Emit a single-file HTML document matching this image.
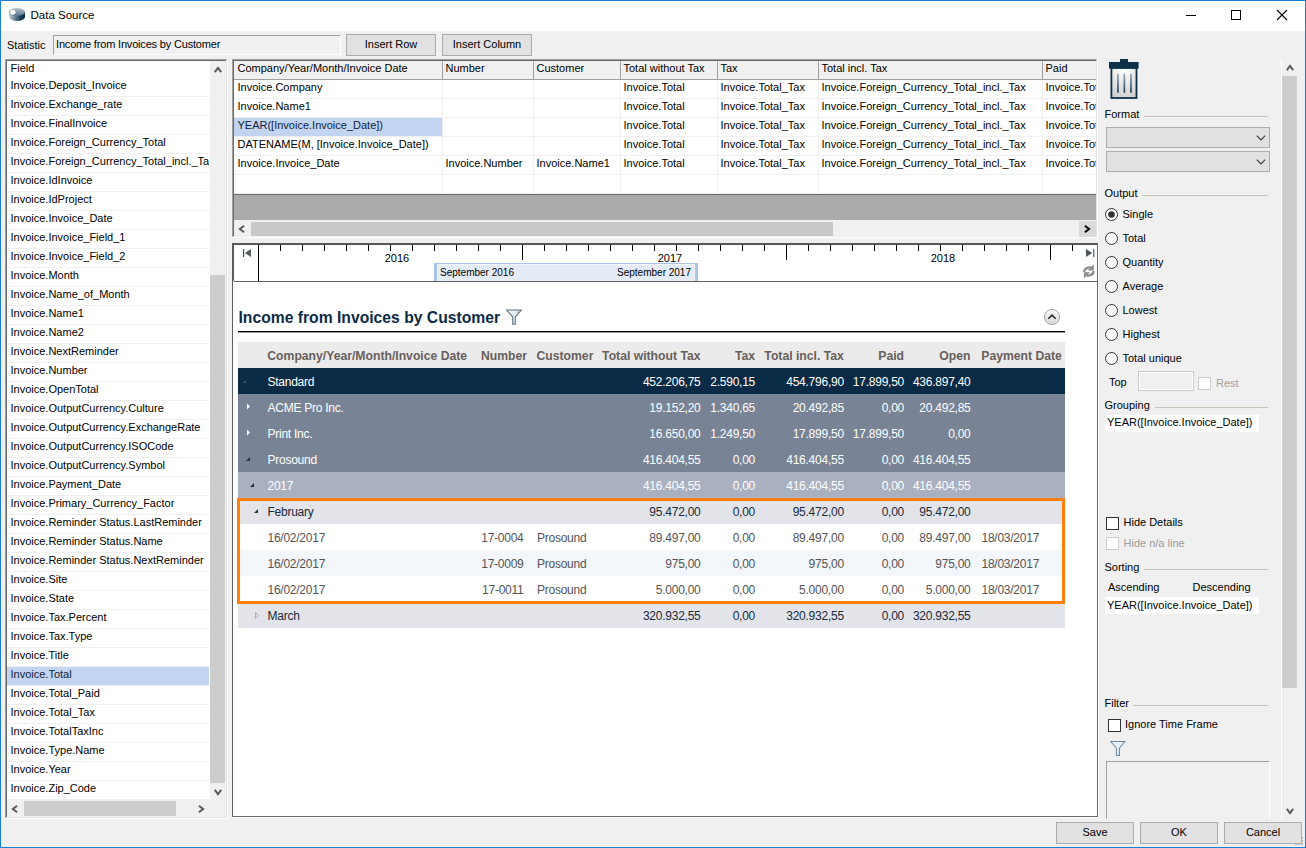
<!DOCTYPE html>
<html><head><meta charset="utf-8"><style>
html,body{margin:0;padding:0;width:1306px;height:848px;overflow:hidden;background:#f0f0f0}
body{position:relative;font-family:"Liberation Sans",sans-serif;font-size:11px;color:#000}
body div, body svg{position:absolute}
.t{white-space:nowrap}
</style></head><body>
<div style="left:0px;top:0px;width:1306px;height:848px;background:#f0f0f0"></div>
<div style="left:1px;top:1px;width:1304px;height:30px;background:#fff"></div>
<svg style="left:8px;top:7px" width="18" height="15" viewBox="0 0 18 15">
<defs><linearGradient id="dg" x1="0" x2="1"><stop offset="0" stop-color="#c4d0d8"/><stop offset="0.35" stop-color="#6f889a"/><stop offset="0.75" stop-color="#0f3a55"/><stop offset="1" stop-color="#0a2d45"/></linearGradient>
<linearGradient id="tg" x1="0" y1="0" x2="0" y2="1"><stop offset="0" stop-color="#b9c7d1"/><stop offset="1" stop-color="#55748a"/></linearGradient></defs>
<path d="M1,5 L1,10 A8,4 0 0 0 17,10 L17,5 Z" fill="url(#dg)"/>
<ellipse cx="9" cy="5" rx="8" ry="4" fill="url(#tg)"/>
<ellipse cx="4.8" cy="5.3" rx="2.7" ry="2.4" fill="#fff"/>
</svg>
<div class="t" style="left:30.5px;top:5.0px;line-height:20px;font-size:11.5px;color:#000;font-weight:normal;">Data Source</div>
<div style="left:1186px;top:15px;width:10px;height:1px;background:#000"></div>
<div style="left:1231px;top:10px;width:10px;height:10px;border:1px solid #000;box-sizing:border-box"></div>
<svg style="left:1276px;top:9px" width="12" height="12" viewBox="0 0 12 12"><path d="M1,1 L11,11 M11,1 L1,11" stroke="#000" stroke-width="1.1"/></svg>
<div class="t" style="left:7px;top:34.5px;line-height:20px;font-size:11px;color:#000;font-weight:normal;">Statistic</div>
<div style="left:53px;top:35px;width:288px;height:20px;background:#f0f0f0;border-top:1px solid #a0a0a0;border-left:1px solid #a0a0a0;border-right:1px solid #fff;border-bottom:1px solid #fff;box-sizing:border-box"></div>
<div class="t" style="left:56px;top:34.0px;line-height:20px;font-size:11px;color:#000;font-weight:normal;letter-spacing:-0.18px">Income from Invoices by Customer</div>
<div style="left:346px;top:34px;width:90px;height:22px;background:#e1e1e1;border:1px solid #adadad;box-sizing:border-box"></div>
<div class="t" style="left:241.0px;width:300px;top:34.0px;line-height:20px;font-size:11px;color:#000;font-weight:normal;text-align:center;">Insert Row</div>
<div style="left:442px;top:34px;width:90px;height:22px;background:#e1e1e1;border:1px solid #adadad;box-sizing:border-box"></div>
<div class="t" style="left:337.0px;width:300px;top:34.0px;line-height:20px;font-size:11px;color:#000;font-weight:normal;text-align:center;">Insert Column</div>
<div style="left:5px;top:59px;width:222px;height:1px;background:#a0a0a0"></div>
<div style="left:5px;top:59px;width:1px;height:759px;background:#a0a0a0"></div>
<div style="left:5px;top:818px;width:223px;height:1px;background:#ffffff"></div>
<div style="left:227px;top:59px;width:1px;height:760px;background:#ffffff"></div>
<div style="left:6px;top:60px;width:220px;height:1px;background:#696969"></div>
<div style="left:6px;top:60px;width:1px;height:757px;background:#696969"></div>
<div style="left:6px;top:817px;width:221px;height:1px;background:#e3e3e3"></div>
<div style="left:226px;top:60px;width:1px;height:758px;background:#e3e3e3"></div>
<div style="left:7px;top:61px;width:203px;height:739px;background:#fff"></div>
<div style="left:7px;top:61px;width:202px;height:739px;overflow:hidden">
<div class="t" style="left:3.5px;top:-3px;line-height:20px;">Field</div>
<div style="left:0;top:35px;width:202px;height:1px;background:#efefef"></div>
<div class="t" style="left:3.5px;top:14px;line-height:20px;color:#000">Invoice.Deposit_Invoice</div>
<div style="left:0;top:54px;width:202px;height:1px;background:#efefef"></div>
<div class="t" style="left:3.5px;top:33px;line-height:20px;color:#000">Invoice.Exchange_rate</div>
<div style="left:0;top:73px;width:202px;height:1px;background:#efefef"></div>
<div class="t" style="left:3.5px;top:52px;line-height:20px;color:#000">Invoice.FinalInvoice</div>
<div style="left:0;top:92px;width:202px;height:1px;background:#efefef"></div>
<div class="t" style="left:3.5px;top:71px;line-height:20px;color:#000">Invoice.Foreign_Currency_Total</div>
<div style="left:0;top:111px;width:202px;height:1px;background:#efefef"></div>
<div class="t" style="left:3.5px;top:90px;line-height:20px;color:#000">Invoice.Foreign_Currency_Total_incl._Tax</div>
<div style="left:0;top:130px;width:202px;height:1px;background:#efefef"></div>
<div class="t" style="left:3.5px;top:109px;line-height:20px;color:#000">Invoice.IdInvoice</div>
<div style="left:0;top:149px;width:202px;height:1px;background:#efefef"></div>
<div class="t" style="left:3.5px;top:128px;line-height:20px;color:#000">Invoice.IdProject</div>
<div style="left:0;top:168px;width:202px;height:1px;background:#efefef"></div>
<div class="t" style="left:3.5px;top:147px;line-height:20px;color:#000">Invoice.Invoice_Date</div>
<div style="left:0;top:187px;width:202px;height:1px;background:#efefef"></div>
<div class="t" style="left:3.5px;top:166px;line-height:20px;color:#000">Invoice.Invoice_Field_1</div>
<div style="left:0;top:206px;width:202px;height:1px;background:#efefef"></div>
<div class="t" style="left:3.5px;top:185px;line-height:20px;color:#000">Invoice.Invoice_Field_2</div>
<div style="left:0;top:225px;width:202px;height:1px;background:#efefef"></div>
<div class="t" style="left:3.5px;top:204px;line-height:20px;color:#000">Invoice.Month</div>
<div style="left:0;top:244px;width:202px;height:1px;background:#efefef"></div>
<div class="t" style="left:3.5px;top:223px;line-height:20px;color:#000">Invoice.Name_of_Month</div>
<div style="left:0;top:263px;width:202px;height:1px;background:#efefef"></div>
<div class="t" style="left:3.5px;top:242px;line-height:20px;color:#000">Invoice.Name1</div>
<div style="left:0;top:282px;width:202px;height:1px;background:#efefef"></div>
<div class="t" style="left:3.5px;top:261px;line-height:20px;color:#000">Invoice.Name2</div>
<div style="left:0;top:301px;width:202px;height:1px;background:#efefef"></div>
<div class="t" style="left:3.5px;top:280px;line-height:20px;color:#000">Invoice.NextReminder</div>
<div style="left:0;top:320px;width:202px;height:1px;background:#efefef"></div>
<div class="t" style="left:3.5px;top:299px;line-height:20px;color:#000">Invoice.Number</div>
<div style="left:0;top:339px;width:202px;height:1px;background:#efefef"></div>
<div class="t" style="left:3.5px;top:318px;line-height:20px;color:#000">Invoice.OpenTotal</div>
<div style="left:0;top:358px;width:202px;height:1px;background:#efefef"></div>
<div class="t" style="left:3.5px;top:337px;line-height:20px;color:#000">Invoice.OutputCurrency.Culture</div>
<div style="left:0;top:377px;width:202px;height:1px;background:#efefef"></div>
<div class="t" style="left:3.5px;top:356px;line-height:20px;color:#000">Invoice.OutputCurrency.ExchangeRate</div>
<div style="left:0;top:396px;width:202px;height:1px;background:#efefef"></div>
<div class="t" style="left:3.5px;top:375px;line-height:20px;color:#000">Invoice.OutputCurrency.ISOCode</div>
<div style="left:0;top:415px;width:202px;height:1px;background:#efefef"></div>
<div class="t" style="left:3.5px;top:394px;line-height:20px;color:#000">Invoice.OutputCurrency.Symbol</div>
<div style="left:0;top:434px;width:202px;height:1px;background:#efefef"></div>
<div class="t" style="left:3.5px;top:413px;line-height:20px;color:#000">Invoice.Payment_Date</div>
<div style="left:0;top:453px;width:202px;height:1px;background:#efefef"></div>
<div class="t" style="left:3.5px;top:432px;line-height:20px;color:#000">Invoice.Primary_Currency_Factor</div>
<div style="left:0;top:472px;width:202px;height:1px;background:#efefef"></div>
<div class="t" style="left:3.5px;top:451px;line-height:20px;color:#000">Invoice.Reminder Status.LastReminder</div>
<div style="left:0;top:491px;width:202px;height:1px;background:#efefef"></div>
<div class="t" style="left:3.5px;top:470px;line-height:20px;color:#000">Invoice.Reminder Status.Name</div>
<div style="left:0;top:510px;width:202px;height:1px;background:#efefef"></div>
<div class="t" style="left:3.5px;top:489px;line-height:20px;color:#000">Invoice.Reminder Status.NextReminder</div>
<div style="left:0;top:529px;width:202px;height:1px;background:#efefef"></div>
<div class="t" style="left:3.5px;top:508px;line-height:20px;color:#000">Invoice.Site</div>
<div style="left:0;top:548px;width:202px;height:1px;background:#efefef"></div>
<div class="t" style="left:3.5px;top:527px;line-height:20px;color:#000">Invoice.State</div>
<div style="left:0;top:567px;width:202px;height:1px;background:#efefef"></div>
<div class="t" style="left:3.5px;top:546px;line-height:20px;color:#000">Invoice.Tax.Percent</div>
<div style="left:0;top:586px;width:202px;height:1px;background:#efefef"></div>
<div class="t" style="left:3.5px;top:565px;line-height:20px;color:#000">Invoice.Tax.Type</div>
<div style="left:0;top:605px;width:202px;height:1px;background:#efefef"></div>
<div class="t" style="left:3.5px;top:584px;line-height:20px;color:#000">Invoice.Title</div>
<div style="left:0;top:606px;width:202px;height:18px;background:#c3d4f0"></div>
<div style="left:0;top:624px;width:202px;height:1px;background:#efefef"></div>
<div class="t" style="left:3.5px;top:603px;line-height:20px;color:#0f1f3a">Invoice.Total</div>
<div style="left:0;top:643px;width:202px;height:1px;background:#efefef"></div>
<div class="t" style="left:3.5px;top:622px;line-height:20px;color:#000">Invoice.Total_Paid</div>
<div style="left:0;top:662px;width:202px;height:1px;background:#efefef"></div>
<div class="t" style="left:3.5px;top:641px;line-height:20px;color:#000">Invoice.Total_Tax</div>
<div style="left:0;top:681px;width:202px;height:1px;background:#efefef"></div>
<div class="t" style="left:3.5px;top:660px;line-height:20px;color:#000">Invoice.TotalTaxInc</div>
<div style="left:0;top:700px;width:202px;height:1px;background:#efefef"></div>
<div class="t" style="left:3.5px;top:679px;line-height:20px;color:#000">Invoice.Type.Name</div>
<div style="left:0;top:719px;width:202px;height:1px;background:#efefef"></div>
<div class="t" style="left:3.5px;top:698px;line-height:20px;color:#000">Invoice.Year</div>
<div style="left:0;top:738px;width:202px;height:1px;background:#efefef"></div>
<div class="t" style="left:3.5px;top:717px;line-height:20px;color:#000">Invoice.Zip_Code</div>
</div>
<div style="left:210px;top:61px;width:16px;height:739px;background:#f0f0f0"></div>
<div style="left:210px;top:275px;width:15px;height:508px;background:#cdcdcd"></div>
<svg style="left:209.5px;top:62px" width="16" height="16" viewBox="-8 -8 16 16"><path d="M-3.2,2.1 L0,-2.1 L3.2,2.1" fill="none" stroke="#5a5a5a" stroke-width="2" stroke-linecap="butt" stroke-linejoin="miter"/></svg>
<svg style="left:209.5px;top:784px" width="16" height="16" viewBox="-8 -8 16 16"><path d="M-3.2,-2.1 L0,2.1 L3.2,-2.1" fill="none" stroke="#5a5a5a" stroke-width="2" stroke-linecap="butt" stroke-linejoin="miter"/></svg>
<div style="left:7px;top:800px;width:219px;height:17px;background:#f0f0f0"></div>
<div style="left:24px;top:801px;width:152px;height:15px;background:#cdcdcd"></div>
<svg style="left:7px;top:800.5px" width="16" height="16" viewBox="-8 -8 16 16"><path d="M2.1,-3.2 L-2.1,0 L2.1,3.2" fill="none" stroke="#5a5a5a" stroke-width="2" stroke-linecap="butt" stroke-linejoin="miter"/></svg>
<svg style="left:193px;top:800.5px" width="16" height="16" viewBox="-8 -8 16 16"><path d="M-2.1,-3.2 L2.1,0 L-2.1,3.2" fill="none" stroke="#5a5a5a" stroke-width="2" stroke-linecap="butt" stroke-linejoin="miter"/></svg>
<div style="left:232px;top:59px;width:865px;height:1px;background:#a0a0a0"></div>
<div style="left:232px;top:59px;width:1px;height:178px;background:#a0a0a0"></div>
<div style="left:232px;top:237px;width:866px;height:1px;background:#ffffff"></div>
<div style="left:1097px;top:59px;width:1px;height:179px;background:#ffffff"></div>
<div style="left:233px;top:60px;width:863px;height:1px;background:#696969"></div>
<div style="left:233px;top:60px;width:1px;height:176px;background:#696969"></div>
<div style="left:233px;top:236px;width:864px;height:1px;background:#e3e3e3"></div>
<div style="left:1096px;top:60px;width:1px;height:177px;background:#e3e3e3"></div>
<div style="left:234px;top:61px;width:862px;height:175px;background:#fff"></div>
<div style="left:234px;top:61px;width:862px;height:18px;background:#f0f0f0"></div>
<div style="left:234px;top:79px;width:862px;height:1px;background:#a0a0a0"></div>
<div class="t" style="left:237.5px;top:57.5px;line-height:20px;font-size:11px;color:#000;font-weight:normal;">Company/Year/Month/Invoice Date</div>
<div style="left:442px;top:61px;width:1px;height:18px;background:#a0a0a0"></div>
<div style="left:442px;top:80px;width:1px;height:114px;background:#f0f0f0"></div>
<div class="t" style="left:445.5px;top:57.5px;line-height:20px;font-size:11px;color:#000;font-weight:normal;">Number</div>
<div style="left:533px;top:61px;width:1px;height:18px;background:#a0a0a0"></div>
<div style="left:533px;top:80px;width:1px;height:114px;background:#f0f0f0"></div>
<div class="t" style="left:536.5px;top:57.5px;line-height:20px;font-size:11px;color:#000;font-weight:normal;">Customer</div>
<div style="left:620px;top:61px;width:1px;height:18px;background:#a0a0a0"></div>
<div style="left:620px;top:80px;width:1px;height:114px;background:#f0f0f0"></div>
<div class="t" style="left:623.5px;top:57.5px;line-height:20px;font-size:11px;color:#000;font-weight:normal;">Total without Tax</div>
<div style="left:717px;top:61px;width:1px;height:18px;background:#a0a0a0"></div>
<div style="left:717px;top:80px;width:1px;height:114px;background:#f0f0f0"></div>
<div class="t" style="left:720.5px;top:57.5px;line-height:20px;font-size:11px;color:#000;font-weight:normal;">Tax</div>
<div style="left:818px;top:61px;width:1px;height:18px;background:#a0a0a0"></div>
<div style="left:818px;top:80px;width:1px;height:114px;background:#f0f0f0"></div>
<div class="t" style="left:821.5px;top:57.5px;line-height:20px;font-size:11px;color:#000;font-weight:normal;">Total incl. Tax</div>
<div style="left:1042px;top:61px;width:1px;height:18px;background:#a0a0a0"></div>
<div style="left:1042px;top:80px;width:1px;height:114px;background:#f0f0f0"></div>
<div class="t" style="left:1045.5px;top:57.5px;line-height:20px;font-size:11px;color:#000;font-weight:normal;">Paid</div>
<div style="left:234px;top:98px;width:862px;height:1px;background:#f0f0f0"></div>
<div style="left:234px;top:117px;width:862px;height:1px;background:#f0f0f0"></div>
<div style="left:234px;top:136px;width:862px;height:1px;background:#f0f0f0"></div>
<div style="left:234px;top:155px;width:862px;height:1px;background:#f0f0f0"></div>
<div style="left:234px;top:174px;width:862px;height:1px;background:#f0f0f0"></div>
<div style="left:234px;top:193px;width:862px;height:1px;background:#f0f0f0"></div>
<div style="left:234px;top:118px;width:208px;height:18px;background:#c3d4f0"></div>
<div style="left:234px;top:61px;width:862px;height:133px;overflow:hidden">
<div class="t" style="left:3.5px;top:15.5px;line-height:20px;color:#000">Invoice.Company</div>
<div class="t" style="left:389.5px;top:15.5px;line-height:20px;color:#000">Invoice.Total</div>
<div class="t" style="left:486.5px;top:15.5px;line-height:20px;color:#000">Invoice.Total_Tax</div>
<div class="t" style="left:587.5px;top:15.5px;line-height:20px;color:#000">Invoice.Foreign_Currency_Total_incl._Tax</div>
<div class="t" style="left:811.5px;top:15.5px;line-height:20px;color:#000">Invoice.Total</div>
<div class="t" style="left:3.5px;top:34.5px;line-height:20px;color:#000">Invoice.Name1</div>
<div class="t" style="left:389.5px;top:34.5px;line-height:20px;color:#000">Invoice.Total</div>
<div class="t" style="left:486.5px;top:34.5px;line-height:20px;color:#000">Invoice.Total_Tax</div>
<div class="t" style="left:587.5px;top:34.5px;line-height:20px;color:#000">Invoice.Foreign_Currency_Total_incl._Tax</div>
<div class="t" style="left:811.5px;top:34.5px;line-height:20px;color:#000">Invoice.Total</div>
<div class="t" style="left:3.5px;top:53.5px;line-height:20px;color:#0f1f3a">YEAR([Invoice.Invoice_Date])</div>
<div class="t" style="left:389.5px;top:53.5px;line-height:20px;color:#000">Invoice.Total</div>
<div class="t" style="left:486.5px;top:53.5px;line-height:20px;color:#000">Invoice.Total_Tax</div>
<div class="t" style="left:587.5px;top:53.5px;line-height:20px;color:#000">Invoice.Foreign_Currency_Total_incl._Tax</div>
<div class="t" style="left:811.5px;top:53.5px;line-height:20px;color:#000">Invoice.Total</div>
<div class="t" style="left:3.5px;top:72.5px;line-height:20px;color:#000">DATENAME(M, [Invoice.Invoice_Date])</div>
<div class="t" style="left:389.5px;top:72.5px;line-height:20px;color:#000">Invoice.Total</div>
<div class="t" style="left:486.5px;top:72.5px;line-height:20px;color:#000">Invoice.Total_Tax</div>
<div class="t" style="left:587.5px;top:72.5px;line-height:20px;color:#000">Invoice.Foreign_Currency_Total_incl._Tax</div>
<div class="t" style="left:811.5px;top:72.5px;line-height:20px;color:#000">Invoice.Total</div>
<div class="t" style="left:3.5px;top:91.5px;line-height:20px;color:#000">Invoice.Invoice_Date</div>
<div class="t" style="left:211.5px;top:91.5px;line-height:20px;color:#000">Invoice.Number</div>
<div class="t" style="left:302.5px;top:91.5px;line-height:20px;color:#000">Invoice.Name1</div>
<div class="t" style="left:389.5px;top:91.5px;line-height:20px;color:#000">Invoice.Total</div>
<div class="t" style="left:486.5px;top:91.5px;line-height:20px;color:#000">Invoice.Total_Tax</div>
<div class="t" style="left:587.5px;top:91.5px;line-height:20px;color:#000">Invoice.Foreign_Currency_Total_incl._Tax</div>
<div class="t" style="left:811.5px;top:91.5px;line-height:20px;color:#000">Invoice.Total</div>
</div>
<div style="left:234px;top:194px;width:862px;height:1px;background:#696969"></div>
<div style="left:234px;top:195px;width:862px;height:25px;background:#ababab"></div>
<div style="left:234px;top:220px;width:862px;height:1px;background:#f0f0f0"></div>
<div style="left:234px;top:221px;width:862px;height:16px;background:#f0f0f0"></div>
<div style="left:251px;top:222px;width:582px;height:14px;background:#c8c8c8"></div>
<svg style="left:234px;top:220.5px" width="16" height="16" viewBox="-8 -8 16 16"><path d="M2.1,-3.2 L-2.1,0 L2.1,3.2" fill="none" stroke="#5a5a5a" stroke-width="2" stroke-linecap="butt" stroke-linejoin="miter"/></svg>
<div style="left:1079px;top:221px;width:17px;height:16px;background:#dadada"></div>
<svg style="left:1079px;top:220.5px" width="16" height="16" viewBox="-8 -8 16 16"><path d="M-2.1,-3.2 L2.1,0 L-2.1,3.2" fill="none" stroke="#000" stroke-width="2" stroke-linecap="butt" stroke-linejoin="miter"/></svg>
<div style="left:232px;top:243px;width:866px;height:575px;background:#fff"></div>
<div style="left:232px;top:243px;width:866px;height:1px;background:#585858"></div>
<div style="left:232px;top:244px;width:866px;height:1px;background:#585858"></div>
<div style="left:232px;top:243px;width:1px;height:574px;background:#5f5f5f"></div>
<div style="left:233px;top:243px;width:1px;height:38px;background:#585858"></div>
<div style="left:1097px;top:243px;width:1px;height:574px;background:#696969"></div>
<div style="left:232px;top:816px;width:866px;height:1px;background:#696969"></div>
<div style="left:232px;top:817px;width:867px;height:1px;background:#ffffff"></div>
<div style="left:1098px;top:243px;width:1px;height:575px;background:#ffffff"></div>
<div style="left:234px;top:281px;width:863px;height:1px;background:#646464"></div>
<div style="left:258px;top:245px;width:1px;height:36px;background:#000"></div>
<div style="left:280px;top:245px;width:1px;height:6px;background:#000"></div>
<div style="left:302px;top:245px;width:1px;height:6px;background:#000"></div>
<div style="left:324px;top:245px;width:1px;height:6px;background:#000"></div>
<div style="left:346px;top:245px;width:1px;height:6px;background:#000"></div>
<div style="left:368px;top:245px;width:1px;height:6px;background:#000"></div>
<div style="left:390px;top:245px;width:1px;height:6px;background:#000"></div>
<div style="left:412px;top:245px;width:1px;height:6px;background:#000"></div>
<div style="left:434px;top:245px;width:1px;height:6px;background:#000"></div>
<div style="left:456px;top:245px;width:1px;height:6px;background:#000"></div>
<div style="left:478px;top:245px;width:1px;height:6px;background:#000"></div>
<div style="left:500px;top:245px;width:1px;height:6px;background:#000"></div>
<div style="left:522px;top:245px;width:1px;height:15px;background:#000"></div>
<div style="left:544px;top:245px;width:1px;height:6px;background:#000"></div>
<div style="left:566px;top:245px;width:1px;height:6px;background:#000"></div>
<div style="left:588px;top:245px;width:1px;height:6px;background:#000"></div>
<div style="left:610px;top:245px;width:1px;height:6px;background:#000"></div>
<div style="left:632px;top:245px;width:1px;height:6px;background:#000"></div>
<div style="left:654px;top:245px;width:1px;height:6px;background:#000"></div>
<div style="left:676px;top:245px;width:1px;height:6px;background:#000"></div>
<div style="left:698px;top:245px;width:1px;height:6px;background:#000"></div>
<div style="left:720px;top:245px;width:1px;height:6px;background:#000"></div>
<div style="left:742px;top:245px;width:1px;height:6px;background:#000"></div>
<div style="left:764px;top:245px;width:1px;height:6px;background:#000"></div>
<div style="left:786px;top:245px;width:1px;height:15px;background:#000"></div>
<div style="left:808px;top:245px;width:1px;height:6px;background:#000"></div>
<div style="left:830px;top:245px;width:1px;height:6px;background:#000"></div>
<div style="left:852px;top:245px;width:1px;height:6px;background:#000"></div>
<div style="left:874px;top:245px;width:1px;height:6px;background:#000"></div>
<div style="left:896px;top:245px;width:1px;height:6px;background:#000"></div>
<div style="left:918px;top:245px;width:1px;height:6px;background:#000"></div>
<div style="left:940px;top:245px;width:1px;height:6px;background:#000"></div>
<div style="left:962px;top:245px;width:1px;height:6px;background:#000"></div>
<div style="left:984px;top:245px;width:1px;height:6px;background:#000"></div>
<div style="left:1006px;top:245px;width:1px;height:6px;background:#000"></div>
<div style="left:1028px;top:245px;width:1px;height:6px;background:#000"></div>
<div style="left:1050px;top:245px;width:1px;height:15px;background:#000"></div>
<div style="left:1072px;top:245px;width:1px;height:6px;background:#000"></div>
<div class="t" style="left:247px;width:300px;top:247.5px;line-height:20px;font-size:11px;color:#000;font-weight:normal;text-align:center;">2016</div>
<div class="t" style="left:520px;width:300px;top:247.5px;line-height:20px;font-size:11px;color:#000;font-weight:normal;text-align:center;">2017</div>
<div class="t" style="left:793px;width:300px;top:247.5px;line-height:20px;font-size:11px;color:#000;font-weight:normal;text-align:center;">2018</div>
<div style="left:434px;top:263px;width:264px;height:18px;background:#e4ecf8;border-top:1px solid #a9c2e8;border-left:3px solid #a9c2e8;border-right:3px solid #a9c2e8;box-sizing:border-box;box-shadow:inset 1px 1px 0 #f3f6fc, inset -1px 0 0 #f3f6fc"></div>
<div class="t" style="left:440px;top:263.0px;line-height:20px;font-size:10px;color:#000;font-weight:normal;">September 2016</div>
<div class="t" style="right:615px;top:263.0px;line-height:20px;font-size:10px;color:#000;font-weight:normal;text-align:right;">September 2017</div>
<svg style="left:242px;top:248px" width="12" height="11" viewBox="0 0 12 11"><rect x="1" y="1" width="1.2" height="8" fill="#1a5a85"/><path d="M2.8,5 L9,1 L9,9 Z" fill="#555c60"/></svg>
<svg style="left:1084px;top:248px" width="12" height="11" viewBox="0 0 12 11"><rect x="9.3" y="1" width="1" height="8" fill="#2f3d46"/><path d="M8.3,5 L2,1 L2,9 Z" fill="#4d565c"/></svg>
<svg style="left:1083px;top:264px" width="12" height="15" viewBox="0 0 12 15"><path d="M1,8 Q2,3 8.2,3.4" fill="none" stroke="#8c8c8c" stroke-width="2.3"/><path d="M10.8,0.3 L10.8,6.6 L4.6,6.6 Z" fill="#8c8c8c"/><path d="M10.8,7 Q10,12 3.6,11.6" fill="none" stroke="#8c8c8c" stroke-width="2.3"/><path d="M0.9,14.6 L0.9,8.3 L7.1,8.3 Z" fill="#8c8c8c"/></svg>
<div class="t" style="left:238.5px;top:307.5px;line-height:20px;font-size:15.7px;color:#0d2a47;font-weight:bold;">Income from Invoices by Customer</div>
<svg style="left:504px;top:308px" width="20" height="18" viewBox="0 0 20 18"><defs><linearGradient id="fg" x1="0" x2="1"><stop offset="0" stop-color="#f6f8fa"/><stop offset="0.6" stop-color="#e6ebef"/><stop offset="1" stop-color="#a9b6c0"/></linearGradient></defs><path d="M2.5,2 L17.5,2 L11.3,8.8 L11.3,16.3 L8.7,16.3 L8.7,8.8 Z" fill="url(#fg)" stroke="#5f7384" stroke-width="1.1" stroke-linejoin="round"/></svg>
<svg style="left:1043px;top:308px" width="18" height="18" viewBox="0 0 18 18"><defs><linearGradient id="cg" x1="0" y1="0" x2="0" y2="1"><stop offset="0" stop-color="#fafafa"/><stop offset="1" stop-color="#d6d6d6"/></linearGradient></defs><circle cx="9" cy="9" r="7.6" fill="url(#cg)" stroke="#a8a8a8" stroke-width="1"/><path d="M5.3,10.8 L9,7.1 L12.7,10.8" fill="none" stroke="#222" stroke-width="1.5"/></svg>
<div style="left:238px;top:331px;width:827px;height:1px;background:#000"></div>
<div style="left:238px;top:332px;width:827px;height:1px;background:#9a9a9a"></div>
<div style="left:238px;top:342px;width:827px;height:26px;background:#ebebeb"></div>
<div class="t" style="left:267.3px;top:345.5px;line-height:20px;font-size:12.2px;color:#67605c;font-weight:bold;">Company/Year/Month/Invoice Date</div>
<div class="t" style="right:779px;top:345.5px;line-height:20px;font-size:12.2px;color:#67605c;font-weight:bold;text-align:right;">Number</div>
<div class="t" style="left:536.5px;top:345.5px;line-height:20px;font-size:12.2px;color:#67605c;font-weight:bold;">Customer</div>
<div class="t" style="right:605.5px;top:345.5px;line-height:20px;font-size:12.2px;color:#67605c;font-weight:bold;text-align:right;">Total without Tax</div>
<div class="t" style="right:551px;top:345.5px;line-height:20px;font-size:12.2px;color:#67605c;font-weight:bold;text-align:right;">Tax</div>
<div class="t" style="right:462.20000000000005px;top:345.5px;line-height:20px;font-size:12.2px;color:#67605c;font-weight:bold;text-align:right;">Total incl. Tax</div>
<div class="t" style="right:402px;top:345.5px;line-height:20px;font-size:12.2px;color:#67605c;font-weight:bold;text-align:right;">Paid</div>
<div class="t" style="right:335.5px;top:345.5px;line-height:20px;font-size:12.2px;color:#67605c;font-weight:bold;text-align:right;">Open</div>
<div class="t" style="left:981.3px;top:345.5px;line-height:20px;font-size:12.2px;color:#67605c;font-weight:bold;">Payment Date</div>
<div style="left:238px;top:368px;width:827px;height:26px;background:#0a2b45"></div>
<div class="t" style="left:267.5px;top:371.5px;line-height:20px;font-size:12px;color:#fff;font-weight:normal;letter-spacing:-0.25px">Standard</div>
<div class="t" style="right:605.5px;top:371.5px;line-height:20px;font-size:12px;color:#fff;font-weight:normal;text-align:right;letter-spacing:-0.25px">452.206,75</div>
<div class="t" style="right:551px;top:371.5px;line-height:20px;font-size:12px;color:#fff;font-weight:normal;text-align:right;letter-spacing:-0.25px">2.590,15</div>
<div class="t" style="right:462.20000000000005px;top:371.5px;line-height:20px;font-size:12px;color:#fff;font-weight:normal;text-align:right;letter-spacing:-0.25px">454.796,90</div>
<div class="t" style="right:402px;top:371.5px;line-height:20px;font-size:12px;color:#fff;font-weight:normal;text-align:right;letter-spacing:-0.25px">17.899,50</div>
<div class="t" style="right:335.5px;top:371.5px;line-height:20px;font-size:12px;color:#fff;font-weight:normal;text-align:right;letter-spacing:-0.25px">436.897,40</div>
<div style="left:238px;top:394px;width:827px;height:26px;background:#788496"></div>
<div class="t" style="left:267.5px;top:397.5px;line-height:20px;font-size:12px;color:#fff;font-weight:normal;letter-spacing:-0.25px">ACME Pro Inc.</div>
<div class="t" style="right:605.5px;top:397.5px;line-height:20px;font-size:12px;color:#fff;font-weight:normal;text-align:right;letter-spacing:-0.25px">19.152,20</div>
<div class="t" style="right:551px;top:397.5px;line-height:20px;font-size:12px;color:#fff;font-weight:normal;text-align:right;letter-spacing:-0.25px">1.340,65</div>
<div class="t" style="right:462.20000000000005px;top:397.5px;line-height:20px;font-size:12px;color:#fff;font-weight:normal;text-align:right;letter-spacing:-0.25px">20.492,85</div>
<div class="t" style="right:402px;top:397.5px;line-height:20px;font-size:12px;color:#fff;font-weight:normal;text-align:right;letter-spacing:-0.25px">0,00</div>
<div class="t" style="right:335.5px;top:397.5px;line-height:20px;font-size:12px;color:#fff;font-weight:normal;text-align:right;letter-spacing:-0.25px">20.492,85</div>
<div style="left:238px;top:420px;width:827px;height:26px;background:#788496"></div>
<div class="t" style="left:267.5px;top:423.5px;line-height:20px;font-size:12px;color:#fff;font-weight:normal;letter-spacing:-0.25px">Print Inc.</div>
<div class="t" style="right:605.5px;top:423.5px;line-height:20px;font-size:12px;color:#fff;font-weight:normal;text-align:right;letter-spacing:-0.25px">16.650,00</div>
<div class="t" style="right:551px;top:423.5px;line-height:20px;font-size:12px;color:#fff;font-weight:normal;text-align:right;letter-spacing:-0.25px">1.249,50</div>
<div class="t" style="right:462.20000000000005px;top:423.5px;line-height:20px;font-size:12px;color:#fff;font-weight:normal;text-align:right;letter-spacing:-0.25px">17.899,50</div>
<div class="t" style="right:402px;top:423.5px;line-height:20px;font-size:12px;color:#fff;font-weight:normal;text-align:right;letter-spacing:-0.25px">17.899,50</div>
<div class="t" style="right:335.5px;top:423.5px;line-height:20px;font-size:12px;color:#fff;font-weight:normal;text-align:right;letter-spacing:-0.25px">0,00</div>
<div style="left:238px;top:446px;width:827px;height:26px;background:#788496"></div>
<div class="t" style="left:267.5px;top:449.5px;line-height:20px;font-size:12px;color:#fff;font-weight:normal;letter-spacing:-0.25px">Prosound</div>
<div class="t" style="right:605.5px;top:449.5px;line-height:20px;font-size:12px;color:#fff;font-weight:normal;text-align:right;letter-spacing:-0.25px">416.404,55</div>
<div class="t" style="right:551px;top:449.5px;line-height:20px;font-size:12px;color:#fff;font-weight:normal;text-align:right;letter-spacing:-0.25px">0,00</div>
<div class="t" style="right:462.20000000000005px;top:449.5px;line-height:20px;font-size:12px;color:#fff;font-weight:normal;text-align:right;letter-spacing:-0.25px">416.404,55</div>
<div class="t" style="right:402px;top:449.5px;line-height:20px;font-size:12px;color:#fff;font-weight:normal;text-align:right;letter-spacing:-0.25px">0,00</div>
<div class="t" style="right:335.5px;top:449.5px;line-height:20px;font-size:12px;color:#fff;font-weight:normal;text-align:right;letter-spacing:-0.25px">416.404,55</div>
<div style="left:238px;top:472px;width:827px;height:26px;background:#a9b0bf"></div>
<div class="t" style="left:267.5px;top:475.5px;line-height:20px;font-size:12px;color:#fff;font-weight:normal;letter-spacing:-0.25px">2017</div>
<div class="t" style="right:605.5px;top:475.5px;line-height:20px;font-size:12px;color:#fff;font-weight:normal;text-align:right;letter-spacing:-0.25px">416.404,55</div>
<div class="t" style="right:551px;top:475.5px;line-height:20px;font-size:12px;color:#fff;font-weight:normal;text-align:right;letter-spacing:-0.25px">0,00</div>
<div class="t" style="right:462.20000000000005px;top:475.5px;line-height:20px;font-size:12px;color:#fff;font-weight:normal;text-align:right;letter-spacing:-0.25px">416.404,55</div>
<div class="t" style="right:402px;top:475.5px;line-height:20px;font-size:12px;color:#fff;font-weight:normal;text-align:right;letter-spacing:-0.25px">0,00</div>
<div class="t" style="right:335.5px;top:475.5px;line-height:20px;font-size:12px;color:#fff;font-weight:normal;text-align:right;letter-spacing:-0.25px">416.404,55</div>
<div style="left:238px;top:498px;width:827px;height:26px;background:#e2e4e9"></div>
<div class="t" style="left:267.5px;top:501.5px;line-height:20px;font-size:12px;color:#1b2a3b;font-weight:normal;letter-spacing:-0.25px">February</div>
<div class="t" style="right:605.5px;top:501.5px;line-height:20px;font-size:12px;color:#1b2a3b;font-weight:normal;text-align:right;letter-spacing:-0.25px">95.472,00</div>
<div class="t" style="right:551px;top:501.5px;line-height:20px;font-size:12px;color:#1b2a3b;font-weight:normal;text-align:right;letter-spacing:-0.25px">0,00</div>
<div class="t" style="right:462.20000000000005px;top:501.5px;line-height:20px;font-size:12px;color:#1b2a3b;font-weight:normal;text-align:right;letter-spacing:-0.25px">95.472,00</div>
<div class="t" style="right:402px;top:501.5px;line-height:20px;font-size:12px;color:#1b2a3b;font-weight:normal;text-align:right;letter-spacing:-0.25px">0,00</div>
<div class="t" style="right:335.5px;top:501.5px;line-height:20px;font-size:12px;color:#1b2a3b;font-weight:normal;text-align:right;letter-spacing:-0.25px">95.472,00</div>
<div style="left:238px;top:524px;width:827px;height:26px;background:#ffffff"></div>
<div class="t" style="left:267.5px;top:527.5px;line-height:20px;font-size:12px;color:#555;font-weight:normal;letter-spacing:-0.25px">16/02/2017</div>
<div class="t" style="right:782.5px;top:527.5px;line-height:20px;font-size:12px;color:#555;font-weight:normal;text-align:right;letter-spacing:-0.25px">17-0004</div>
<div class="t" style="left:537px;top:527.5px;line-height:20px;font-size:12px;color:#555;font-weight:normal;letter-spacing:-0.25px">Prosound</div>
<div class="t" style="right:605.5px;top:527.5px;line-height:20px;font-size:12px;color:#555;font-weight:normal;text-align:right;letter-spacing:-0.25px">89.497,00</div>
<div class="t" style="right:551px;top:527.5px;line-height:20px;font-size:12px;color:#555;font-weight:normal;text-align:right;letter-spacing:-0.25px">0,00</div>
<div class="t" style="right:462.20000000000005px;top:527.5px;line-height:20px;font-size:12px;color:#555;font-weight:normal;text-align:right;letter-spacing:-0.25px">89.497,00</div>
<div class="t" style="right:402px;top:527.5px;line-height:20px;font-size:12px;color:#555;font-weight:normal;text-align:right;letter-spacing:-0.25px">0,00</div>
<div class="t" style="right:335.5px;top:527.5px;line-height:20px;font-size:12px;color:#555;font-weight:normal;text-align:right;letter-spacing:-0.25px">89.497,00</div>
<div class="t" style="left:981.5px;top:527.5px;line-height:20px;font-size:12px;color:#555;font-weight:normal;letter-spacing:-0.25px">18/03/2017</div>
<div style="left:238px;top:550px;width:827px;height:26px;background:#f3f6fb"></div>
<div class="t" style="left:267.5px;top:553.5px;line-height:20px;font-size:12px;color:#555;font-weight:normal;letter-spacing:-0.25px">16/02/2017</div>
<div class="t" style="right:782.5px;top:553.5px;line-height:20px;font-size:12px;color:#555;font-weight:normal;text-align:right;letter-spacing:-0.25px">17-0009</div>
<div class="t" style="left:537px;top:553.5px;line-height:20px;font-size:12px;color:#555;font-weight:normal;letter-spacing:-0.25px">Prosound</div>
<div class="t" style="right:605.5px;top:553.5px;line-height:20px;font-size:12px;color:#555;font-weight:normal;text-align:right;letter-spacing:-0.25px">975,00</div>
<div class="t" style="right:551px;top:553.5px;line-height:20px;font-size:12px;color:#555;font-weight:normal;text-align:right;letter-spacing:-0.25px">0,00</div>
<div class="t" style="right:462.20000000000005px;top:553.5px;line-height:20px;font-size:12px;color:#555;font-weight:normal;text-align:right;letter-spacing:-0.25px">975,00</div>
<div class="t" style="right:402px;top:553.5px;line-height:20px;font-size:12px;color:#555;font-weight:normal;text-align:right;letter-spacing:-0.25px">0,00</div>
<div class="t" style="right:335.5px;top:553.5px;line-height:20px;font-size:12px;color:#555;font-weight:normal;text-align:right;letter-spacing:-0.25px">975,00</div>
<div class="t" style="left:981.5px;top:553.5px;line-height:20px;font-size:12px;color:#555;font-weight:normal;letter-spacing:-0.25px">18/03/2017</div>
<div style="left:238px;top:576px;width:827px;height:26px;background:#ffffff"></div>
<div class="t" style="left:267.5px;top:579.5px;line-height:20px;font-size:12px;color:#555;font-weight:normal;letter-spacing:-0.25px">16/02/2017</div>
<div class="t" style="right:782.5px;top:579.5px;line-height:20px;font-size:12px;color:#555;font-weight:normal;text-align:right;letter-spacing:-0.25px">17-0011</div>
<div class="t" style="left:537px;top:579.5px;line-height:20px;font-size:12px;color:#555;font-weight:normal;letter-spacing:-0.25px">Prosound</div>
<div class="t" style="right:605.5px;top:579.5px;line-height:20px;font-size:12px;color:#555;font-weight:normal;text-align:right;letter-spacing:-0.25px">5.000,00</div>
<div class="t" style="right:551px;top:579.5px;line-height:20px;font-size:12px;color:#555;font-weight:normal;text-align:right;letter-spacing:-0.25px">0,00</div>
<div class="t" style="right:462.20000000000005px;top:579.5px;line-height:20px;font-size:12px;color:#555;font-weight:normal;text-align:right;letter-spacing:-0.25px">5.000,00</div>
<div class="t" style="right:402px;top:579.5px;line-height:20px;font-size:12px;color:#555;font-weight:normal;text-align:right;letter-spacing:-0.25px">0,00</div>
<div class="t" style="right:335.5px;top:579.5px;line-height:20px;font-size:12px;color:#555;font-weight:normal;text-align:right;letter-spacing:-0.25px">5.000,00</div>
<div class="t" style="left:981.5px;top:579.5px;line-height:20px;font-size:12px;color:#555;font-weight:normal;letter-spacing:-0.25px">18/03/2017</div>
<div style="left:238px;top:602px;width:827px;height:26px;background:#e2e4e9"></div>
<div class="t" style="left:267.5px;top:605.5px;line-height:20px;font-size:12px;color:#1b2a3b;font-weight:normal;letter-spacing:-0.25px">March</div>
<div class="t" style="right:605.5px;top:605.5px;line-height:20px;font-size:12px;color:#1b2a3b;font-weight:normal;text-align:right;letter-spacing:-0.25px">320.932,55</div>
<div class="t" style="right:551px;top:605.5px;line-height:20px;font-size:12px;color:#1b2a3b;font-weight:normal;text-align:right;letter-spacing:-0.25px">0,00</div>
<div class="t" style="right:462.20000000000005px;top:605.5px;line-height:20px;font-size:12px;color:#1b2a3b;font-weight:normal;text-align:right;letter-spacing:-0.25px">320.932,55</div>
<div class="t" style="right:402px;top:605.5px;line-height:20px;font-size:12px;color:#1b2a3b;font-weight:normal;text-align:right;letter-spacing:-0.25px">0,00</div>
<div class="t" style="right:335.5px;top:605.5px;line-height:20px;font-size:12px;color:#1b2a3b;font-weight:normal;text-align:right;letter-spacing:-0.25px">320.932,55</div>
<svg style="left:240px;top:368px" width="30" height="260" viewBox="240 368 30 260"><path d="M243,383 L246,380 L246,383 Z" fill="#4a5a6a"/><path d="M247,403.5 L250,406.5 L247,409.5 Z" fill="#fff"/><path d="M247,429.5 L250,432.5 L247,435.5 Z" fill="#fff"/><path d="M246,461 L250,457 L250,461 Z" fill="#2a2f38"/><path d="M250,487 L254,483 L254,487 Z" fill="#2a2f38"/><path d="M254,513 L258,509 L258,513 Z" fill="#2a2f38"/><path d="M255.5,612.5 L258.5,615.5 L255.5,618.5 Z" fill="none" stroke="#9aa0a8" stroke-width="0.8"/></svg>
<div style="left:237px;top:498px;width:828px;height:106px;border:3px solid #ff7f0a;box-sizing:border-box"></div>
<svg style="left:1108px;top:58px" width="32" height="42" viewBox="0 0 32 42">
<defs><radialGradient id="trg" cx="0.5" cy="0.05" r="1"><stop offset="0" stop-color="#ffffff"/><stop offset="1" stop-color="#cfcfcf"/></radialGradient>
<linearGradient id="lng" x1="0" y1="0" x2="0" y2="1"><stop offset="0" stop-color="#9aacba"/><stop offset="1" stop-color="#1c3d58"/></linearGradient></defs>
<rect x="12" y="1" width="8" height="4" fill="#0d3049"/>
<rect x="1" y="4" width="29.6" height="6.6" fill="#0d3049"/>
<rect x="3.4" y="10" width="25.1" height="30" fill="url(#trg)" stroke="#0d3049" stroke-width="1.8"/>
<rect x="9.1" y="15.7" width="1.7" height="19" fill="url(#lng)"/>
<rect x="15.5" y="15.7" width="1.7" height="19" fill="url(#lng)"/>
<rect x="22.1" y="15.7" width="1.7" height="19" fill="url(#lng)"/>
</svg>
<div class="t" style="left:1104.5px;top:103.5px;line-height:20px;font-size:11px;color:#000;font-weight:normal;">Format</div>
<div style="left:1144px;top:116px;width:124px;height:1px;background:#c8c3b6"></div>
<div style="left:1106px;top:127px;width:164px;height:21px;background:#e1e1e1;border:1px solid #adadad;box-sizing:border-box"></div>
<svg style="left:1253px;top:130px" width="16" height="16" viewBox="-8 -8 16 16"><path d="M-4.2,-2.3 L0,1.9 L4.2,-2.3" fill="none" stroke="#3c3c3c" stroke-width="1.15"/></svg>
<div style="left:1106px;top:151px;width:164px;height:21px;background:#e1e1e1;border:1px solid #adadad;box-sizing:border-box"></div>
<svg style="left:1253px;top:154px" width="16" height="16" viewBox="-8 -8 16 16"><path d="M-4.2,-2.3 L0,1.9 L4.2,-2.3" fill="none" stroke="#3c3c3c" stroke-width="1.15"/></svg>
<div class="t" style="left:1104.5px;top:182.5px;line-height:20px;font-size:11px;color:#000;font-weight:normal;">Output</div>
<div style="left:1142px;top:195px;width:126px;height:1px;background:#c8c3b6"></div>
<svg style="left:1104px;top:207.2px" width="15" height="15" viewBox="0 0 15 15"><circle cx="7.5" cy="7.5" r="6" fill="#fff" stroke="#333" stroke-width="1"/><circle cx="7.5" cy="7.5" r="3.3" fill="#333"/></svg>
<div class="t" style="left:1122.5px;top:203.7px;line-height:20px;font-size:11px;color:#000;font-weight:normal;">Single</div>
<svg style="left:1104px;top:231.2px" width="15" height="15" viewBox="0 0 15 15"><circle cx="7.5" cy="7.5" r="6" fill="#fff" stroke="#333" stroke-width="1"/></svg>
<div class="t" style="left:1122.5px;top:227.7px;line-height:20px;font-size:11px;color:#000;font-weight:normal;">Total</div>
<svg style="left:1104px;top:255.2px" width="15" height="15" viewBox="0 0 15 15"><circle cx="7.5" cy="7.5" r="6" fill="#fff" stroke="#333" stroke-width="1"/></svg>
<div class="t" style="left:1122.5px;top:251.7px;line-height:20px;font-size:11px;color:#000;font-weight:normal;">Quantity</div>
<svg style="left:1104px;top:279.2px" width="15" height="15" viewBox="0 0 15 15"><circle cx="7.5" cy="7.5" r="6" fill="#fff" stroke="#333" stroke-width="1"/></svg>
<div class="t" style="left:1122.5px;top:275.7px;line-height:20px;font-size:11px;color:#000;font-weight:normal;">Average</div>
<svg style="left:1104px;top:303.2px" width="15" height="15" viewBox="0 0 15 15"><circle cx="7.5" cy="7.5" r="6" fill="#fff" stroke="#333" stroke-width="1"/></svg>
<div class="t" style="left:1122.5px;top:299.7px;line-height:20px;font-size:11px;color:#000;font-weight:normal;">Lowest</div>
<svg style="left:1104px;top:327.2px" width="15" height="15" viewBox="0 0 15 15"><circle cx="7.5" cy="7.5" r="6" fill="#fff" stroke="#333" stroke-width="1"/></svg>
<div class="t" style="left:1122.5px;top:323.7px;line-height:20px;font-size:11px;color:#000;font-weight:normal;">Highest</div>
<svg style="left:1104px;top:351.2px" width="15" height="15" viewBox="0 0 15 15"><circle cx="7.5" cy="7.5" r="6" fill="#fff" stroke="#333" stroke-width="1"/></svg>
<div class="t" style="left:1122.5px;top:347.7px;line-height:20px;font-size:11px;color:#000;font-weight:normal;">Total unique</div>
<div class="t" style="left:1109px;top:372.0px;line-height:20px;font-size:11px;color:#000;font-weight:normal;">Top</div>
<div style="left:1138px;top:371px;width:56px;height:20px;background:#f0f0f0;border:1px solid #cccccc;box-sizing:border-box;box-shadow:inset 0 0 0 1px #fff"></div>
<div style="left:1198px;top:377px;width:13px;height:13px;background:#fff;border:1px solid #cccccc;box-sizing:border-box"></div>
<div class="t" style="left:1216px;top:372.5px;line-height:20px;font-size:11px;color:#a0a0a0;font-weight:normal;">Rest</div>
<div class="t" style="left:1104.5px;top:395.0px;line-height:20px;font-size:11px;color:#000;font-weight:normal;">Grouping</div>
<div style="left:1155px;top:407px;width:113px;height:1px;background:#c8c3b6"></div>
<div style="left:1105px;top:415px;width:154px;height:17px;background:#fff"></div>
<div class="t" style="left:1107px;top:412.0px;line-height:20px;font-size:11px;color:#000;font-weight:normal;">YEAR([Invoice.Invoice_Date])</div>
<div style="left:1106px;top:517px;width:13px;height:13px;background:#fff;border:1px solid #333;box-sizing:border-box"></div>
<div class="t" style="left:1123.5px;top:512.0px;line-height:20px;font-size:11px;color:#000;font-weight:normal;">Hide Details</div>
<div style="left:1106px;top:537px;width:13px;height:13px;background:#fff;border:1px solid #cccccc;box-sizing:border-box"></div>
<div class="t" style="left:1123.5px;top:532.5px;line-height:20px;font-size:11px;color:#9c9c9c;font-weight:normal;">Hide n/a line</div>
<div class="t" style="left:1104.5px;top:557.0px;line-height:20px;font-size:11px;color:#000;font-weight:normal;">Sorting</div>
<div style="left:1144px;top:569px;width:124px;height:1px;background:#c8c3b6"></div>
<div class="t" style="left:1108px;top:577.0px;line-height:20px;font-size:11px;color:#000;font-weight:normal;">Ascending</div>
<div class="t" style="left:1192.5px;top:577.0px;line-height:20px;font-size:11px;color:#000;font-weight:normal;">Descending</div>
<div style="left:1105px;top:597px;width:154px;height:17px;background:#fff"></div>
<div class="t" style="left:1107px;top:594.5px;line-height:20px;font-size:11px;color:#000;font-weight:normal;">YEAR([Invoice.Invoice_Date])</div>
<div class="t" style="left:1104.5px;top:693.0px;line-height:20px;font-size:11px;color:#000;font-weight:normal;">Filter</div>
<div style="left:1133px;top:705px;width:135px;height:1px;background:#c8c3b6"></div>
<div style="left:1108px;top:719px;width:13px;height:13px;background:#fff;border:1px solid #333;box-sizing:border-box"></div>
<div class="t" style="left:1125px;top:714.0px;line-height:20px;font-size:11px;color:#000;font-weight:normal;">Ignore Time Frame</div>
<svg style="left:1109px;top:740px" width="18" height="18" viewBox="0 0 18 18"><path d="M1.5,1.5 L16,1.5 L10.5,8 L10.5,15.5 L7.5,15.5 L7.5,8 Z" fill="#e8f0f6" stroke="#6d8aa3" stroke-width="1.1" stroke-linejoin="round"/></svg>
<div style="left:1106px;top:761px;width:164px;height:58px;background:#f0f0f0;border-top:1px solid #a0a0a0;border-left:1px solid #a0a0a0;border-right:1px solid #fff;box-sizing:border-box"></div>
<div style="left:1281px;top:59px;width:1px;height:760px;background:#ffffff"></div>
<div style="left:1282px;top:59px;width:16px;height:760px;background:#f0f0f0"></div>
<div style="left:1282px;top:76px;width:15px;height:612px;background:#cdcdcd"></div>
<svg style="left:1281.5px;top:60px" width="16" height="16" viewBox="-8 -8 16 16"><path d="M-3.2,2.1 L0,-2.1 L3.2,2.1" fill="none" stroke="#5a5a5a" stroke-width="2" stroke-linecap="butt" stroke-linejoin="miter"/></svg>
<svg style="left:1281.5px;top:802.5px" width="16" height="16" viewBox="-8 -8 16 16"><path d="M-3.2,-2.1 L0,2.1 L3.2,-2.1" fill="none" stroke="#5a5a5a" stroke-width="2" stroke-linecap="butt" stroke-linejoin="miter"/></svg>
<div style="left:1056px;top:822px;width:78px;height:22px;background:#e1e1e1;border:1px solid #adadad;box-sizing:border-box"></div>
<div class="t" style="left:945px;width:300px;top:822.0px;line-height:20px;font-size:11px;color:#000;font-weight:normal;text-align:center;">Save</div>
<div style="left:1140px;top:822px;width:78px;height:22px;background:#e1e1e1;border:1px solid #adadad;box-sizing:border-box"></div>
<div class="t" style="left:1029px;width:300px;top:822.0px;line-height:20px;font-size:11px;color:#000;font-weight:normal;text-align:center;">OK</div>
<div style="left:1224px;top:822px;width:78px;height:22px;background:#e1e1e1;border:1px solid #adadad;box-sizing:border-box"></div>
<div class="t" style="left:1113px;width:300px;top:822.0px;line-height:20px;font-size:11px;color:#000;font-weight:normal;text-align:center;">Cancel</div>
<svg style="left:1290px;top:832px" width="16" height="16" viewBox="1290 832 16 16" fill="#b4b4b4"><rect x="1301" y="837" width="2" height="2"/><rect x="1301" y="840" width="2" height="2"/><rect x="1301" y="843" width="2" height="2"/><rect x="1298" y="843" width="2" height="2"/><rect x="1295" y="843" width="2" height="2"/></svg>
<div style="left:0px;top:0px;width:1306px;height:848px;border:1px solid #1a7fd6;box-sizing:border-box;background:transparent"></div>
</body></html>
